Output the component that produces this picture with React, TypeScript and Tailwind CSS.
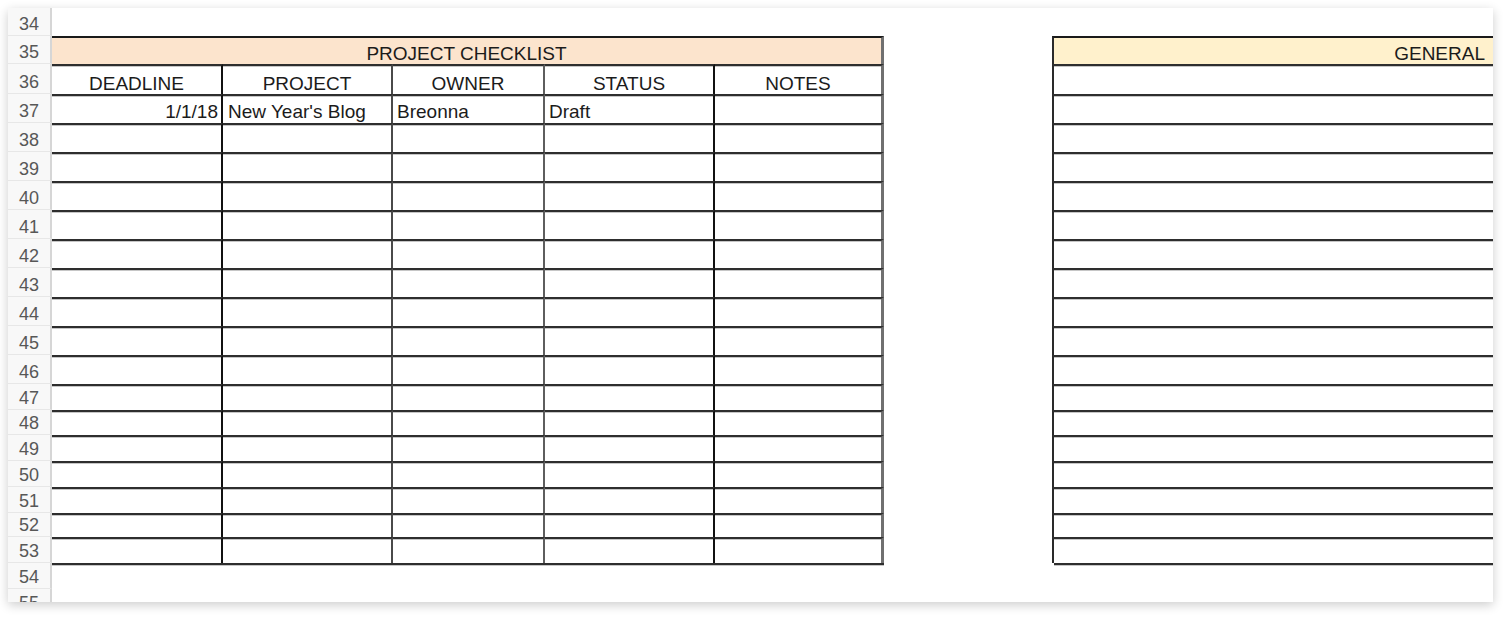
import React from "react";

const rowHeights: Record<number, string> = {
  34: "h-[28px]",
  35: "h-[28px]",
  36: "h-[30px]",
  37: "h-[29px]",
  38: "h-[29px]",
  39: "h-[29px]",
  40: "h-[29px]",
  41: "h-[29px]",
  42: "h-[29px]",
  43: "h-[29px]",
  44: "h-[29px]",
  45: "h-[29px]",
  46: "h-[29px]",
  47: "h-[26px]",
  48: "h-[25px]",
  49: "h-[26px]",
  50: "h-[26px]",
  51: "h-[26px]",
  52: "h-[24px]",
  53: "h-[26px]",
  54: "h-[26px]",
  55: "h-[26px]",
};

const rows = Array.from({ length: 22 }, (_, i) => 34 + i);

const colClasses = [
  "w-[171px] border-r-2 border-r-[#111111]",
  "w-[170px] border-r-[2px] border-r-[#4a4a4a]",
  "w-[152px] border-r-2 border-r-[#5e5e5e]",
  "w-[170px] border-r-2 border-r-[#111111]",
  "w-[169px] border-r-[3px] border-r-[#707070]",
];

const headers = ["DEADLINE", "PROJECT", "OWNER", "STATUS", "NOTES"];
const firstRow = ["1/1/18", "New Year's Blog", "Breonna", "Draft", ""];

const lineTop =
  "border-t-2 border-t-[#2e2e2e] shadow-[inset_0_1px_0_#c6c6c6]";

function LeftArea({ r }: { r: number }) {
  if (r === 34 || r === 55) return <div className="w-[832px] shrink-0" />;
  if (r === 54)
    return <div className={`w-[832px] shrink-0 ${lineTop} border-t-[#1c1c1c]`} />;
  if (r === 35)
    return (
      <div className="w-[832px] shrink-0 border-t-2 border-t-[#1a1a1a] border-r-[3px] border-r-[#707070] bg-[#fce4cd] flex items-end justify-center pb-[1px] leading-[19px]">
        PROJECT CHECKLIST
      </div>
    );
  return (
    <div className="flex shrink-0">
      {colClasses.map((c, i) => {
        let content: React.ReactNode = null;
        let align = "justify-start pl-[4px]";
        if (r === 36) {
          content = headers[i];
          align = "justify-center";
        } else if (r === 37) {
          content = firstRow[i];
          if (i === 0) align = "justify-end pr-[3px]";
          if (i === 1) align = "justify-start pl-[5px]";
        }
        return (
          <div
            key={i}
            className={`${c} ${lineTop} flex items-end ${align} ${
              r === 36 ? "pb-[1px]" : "pb-[2px]"
            } leading-[19px] whitespace-nowrap overflow-hidden`}
          >
            {content}
          </div>
        );
      })}
    </div>
  );
}

function RightArea({ r }: { r: number }) {
  if (r === 34 || r === 55) return <div className="flex-1" />;
  if (r === 54)
    return <div className={`flex-1 ${lineTop} border-t-[#1c1c1c] ml-[2px]`} />;
  if (r === 35)
    return (
      <div className="flex-1 border-t-2 border-t-[#1a1a1a] border-l-2 border-l-[#2a2a2a] bg-[#fff1cc] flex items-end justify-end pr-[8px] pb-[1px] leading-[19px]">
        GENERAL
      </div>
    );
  return <div className={`flex-1 ${lineTop} border-l-2 border-l-[#2a2a2a]`} />;
}

export default function App() {
  return (
    <div className="w-[1509px] h-[619px] bg-white pl-[8px] pt-[8px] overflow-hidden">
      <div
        className="w-[1485px] h-[594px] bg-white overflow-hidden shadow-[0_3px_10px_rgba(0,0,0,0.2)] flex flex-col text-[19px] text-[#1b1b1b]"
        style={{ fontFamily: '"Liberation Sans", Arial, sans-serif' }}
      >
        {rows.map((r) => (
          <div key={r} className={`flex shrink-0 ${rowHeights[r]}`}>
            <div className="w-[44px] shrink-0 bg-[#f8f8f8] border-r-2 border-r-[#d6d6d6] border-b border-b-[#e7e7e7] flex items-end justify-center pb-[2px] text-[18px] leading-[18px] text-[#575757]">
              {r}
            </div>
            <LeftArea r={r} />
            <div className="w-[168px] shrink-0" />
            <RightArea r={r} />
          </div>
        ))}
      </div>
    </div>
  );
}
